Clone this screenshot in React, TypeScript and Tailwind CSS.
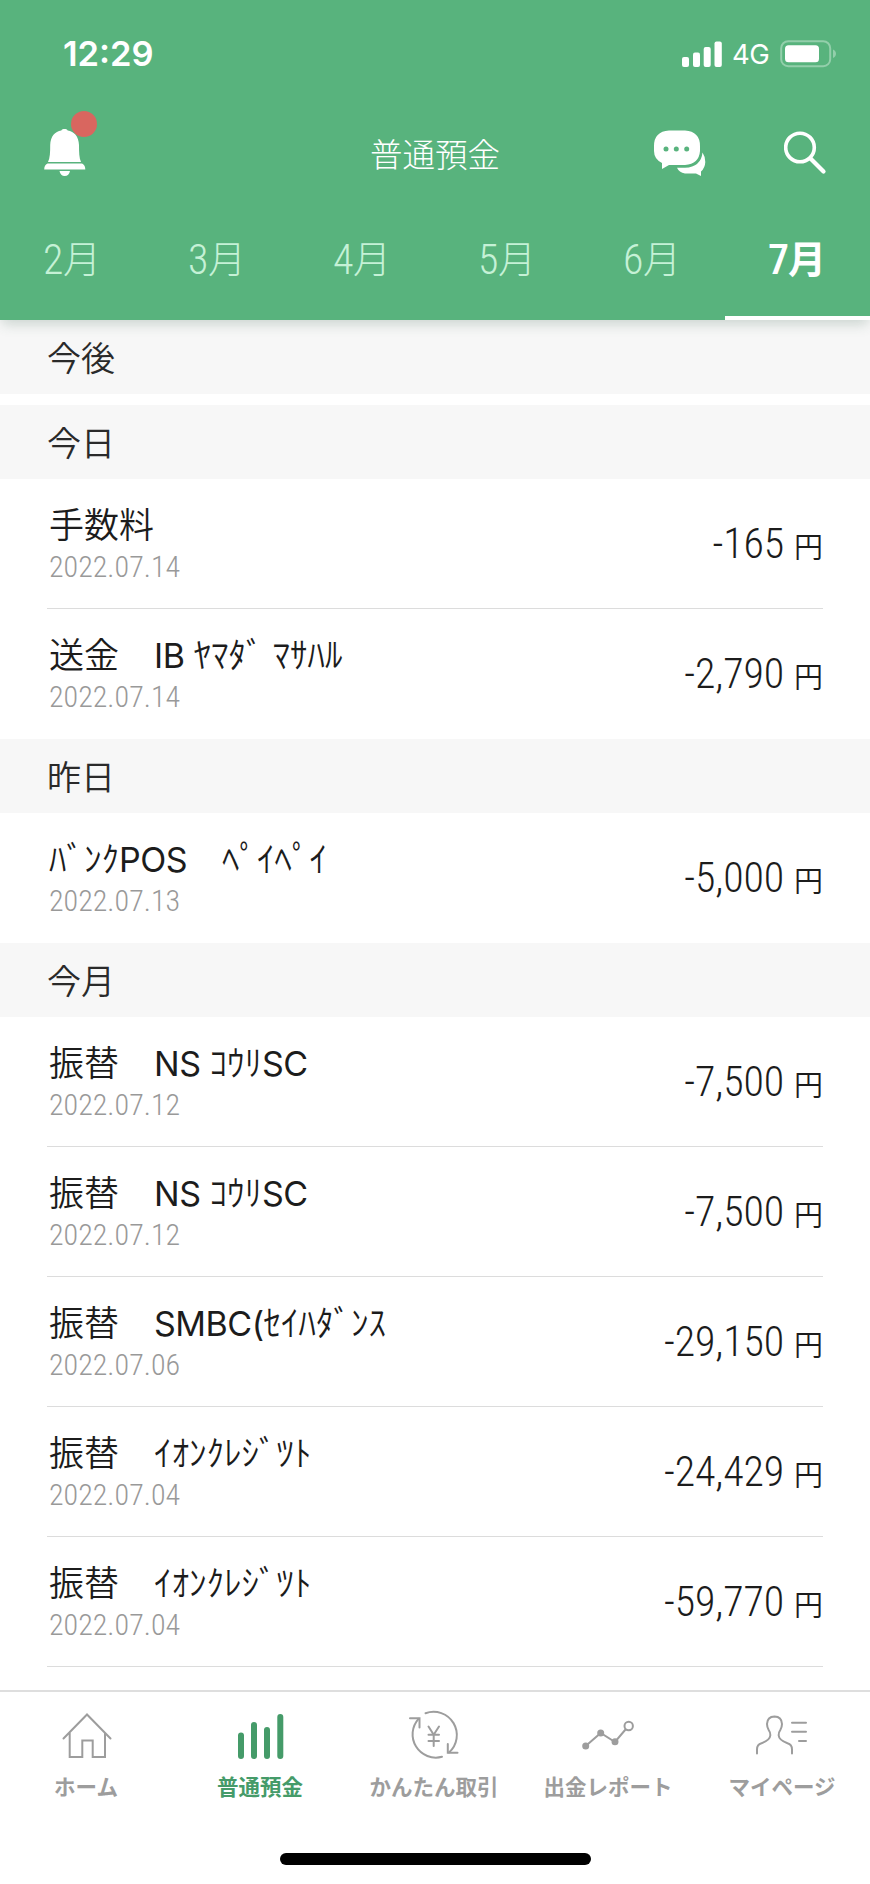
import React from 'react';

type Entry = { name: string; date: string; amount: string };
type Group = { label: string; entries: Entry[]; more?: boolean };

const months = ['2', '3', '4', '5', '6', '7'];

const groups: Group[] = [
  {
    label: '今日',
    entries: [
      { name: '手数料', date: '2022.07.14', amount: '-165' },
      { name: '送金　IB ﾔﾏﾀﾞ ﾏｻﾊﾙ', date: '2022.07.14', amount: '-2,790' },
    ],
  },
  {
    label: '昨日',
    entries: [{ name: 'ﾊﾞﾝｸPOS　ﾍﾟｲﾍﾟｲ', date: '2022.07.13', amount: '-5,000' }],
  },
  {
    label: '今月',
    more: true,
    entries: [
      { name: '振替　NS ｺｳﾘSC', date: '2022.07.12', amount: '-7,500' },
      { name: '振替　NS ｺｳﾘSC', date: '2022.07.12', amount: '-7,500' },
      { name: '振替　SMBC(ｾｲﾊﾀﾞﾝｽ', date: '2022.07.06', amount: '-29,150' },
      { name: '振替　ｲｵﾝｸﾚｼﾞﾂﾄ', date: '2022.07.04', amount: '-24,429' },
      { name: '振替　ｲｵﾝｸﾚｼﾞﾂﾄ', date: '2022.07.04', amount: '-59,770' },
    ],
  },
];

function StatusBar() {
  return (
    <div className="flex h-[104px] items-start justify-between pt-[33px] pr-[32px] pl-[63px]">
      <span className="font-['Inter',sans-serif] text-[34.5px] leading-[41px] font-semibold">12:29</span>
      <div className="flex items-center">
        <svg viewBox="0 0 40 26" className="h-[26px] w-[40px] fill-white">
          <rect x="0" y="16" width="7" height="10" rx="2" />
          <rect x="11" y="11.5" width="7" height="14.5" rx="2" />
          <rect x="21.7" y="6" width="7" height="20" rx="2" />
          <rect x="32.5" y="0.5" width="7.3" height="25.5" rx="2" />
        </svg>
        <span className="ml-[10px] h-[41px] w-[48px] pt-px font-['Inter',sans-serif] text-[27.5px] leading-[41px] font-normal tracking-[-0.5px]">4G</span>
        <svg viewBox="0 0 58 28" className="h-[28px] w-[58px]">
          <rect x="1.2" y="1.2" width="49" height="25" rx="7" fill="none" stroke="#93cfab" strokeWidth="2" />
          <rect x="5" y="5.2" width="34" height="17" rx="3.5" fill="white" />
          <path d="M53 9.500c4 1.500 4 7 0 8.500z" fill="#93cfab" />
        </svg>
      </div>
    </div>
  );
}

function TitleBar() {
  return (
    <div className="flex h-[104px] items-start pr-[43px] pl-[44px]">
      <div className="relative w-[296px] pt-[24px]">
        <svg viewBox="0 0 42 48" className="h-[48px] w-[42px] fill-white">
          <path d="M4 34C6 30 6.200 24 6.200 17C6.500 8 11 3.500 17.300 2.400C18.500 0.500 22.500 0.500 23.700 2.400C30 3.500 34.700 8 35 17C35 24 35.200 30 37 34z" />
          <path d="M3.500 35.500H38Q41.300 37 41.300 41.500H0.200Q0.200 37 3.500 35.500z" />
          <path d="M15.500 43H26Q25 48 20.700 48Q16.500 48 15.500 43z" />
        </svg>
        {/* unread badge */}
        <span className="absolute top-[6.5px] left-[26.5px] size-[26px] rounded-full bg-[#d9665f]" />
      </div>
      <h1 className="w-[190px] pt-[26px] text-center font-['Noto_Sans_CJK_JP',sans-serif] text-[32.5px] leading-[46px] font-light">普通預金</h1>
      <div className="ml-auto flex gap-[78px] pt-[26px]">
        <svg viewBox="0 0 52 46" className="h-[46px] w-[52px]">
          <path d="M15 0.500H31Q46 1.500 46 16V21Q45 34 31 35H15L8 39V33Q0 29 0 21V16Q0 1.500 15 0.500z" fill="white" />
          <circle cx="12" cy="19" r="2.500" fill="#58b37d" />
          <circle cx="22.300" cy="19" r="2.500" fill="#58b37d" />
          <circle cx="32.700" cy="19" r="2.500" fill="#58b37d" />
          <path d="M48.500 22.500Q51.500 27 51.300 32Q51 38 47 41.500V46L42 43.500H31Q25 42.500 23 37.800H31Q47 37 48.500 22.500z" fill="white" />
        </svg>
        <svg viewBox="0 0 43 45" className="h-[45px] w-[43px] fill-none stroke-white" strokeLinecap="round">
          <circle cx="16" cy="17.500" r="14.300" strokeWidth="3.600" />
          <path d="M26.500 28.500L39.500 41.500" strokeWidth="4.200" />
        </svg>
      </div>
    </div>
  );
}

function MonthTabs() {
  return (
    <div className="flex h-[112px]">
      {months.map((m) => {
        const active = m === '7';
        return (
          <div
            key={m}
            className={`flex w-[145px] items-start border-b-4 pt-[24px] pl-[43px] ${active ? 'border-white text-white' : 'border-transparent text-[#c5f1d6]'}`}
          >
            <span className={`mt-[3px] w-[20px] font-['Roboto_Condensed','Roboto',sans-serif] text-[42px] leading-[50px] [font-stretch:75%] ${active ? 'font-medium' : 'font-light'}`}>{m}</span>
            <span className={`font-['Noto_Sans_CJK_JP',sans-serif] text-[38px] leading-[50px] ${active ? 'font-bold' : 'font-light'}`}>月</span>
          </div>
        );
      })}
    </div>
  );
}

function SectionLabel({ children }: { children: React.ReactNode }) {
  return (
    <h2 className="flex h-[74px] items-center bg-[#f7f7f7] pl-[47px] font-['Noto_Sans_CJK_JP',sans-serif] text-[34px] leading-[50px] font-[350] text-[#2a2a2a]">
      {children}
    </h2>
  );
}

// Latin runs are set a little heavier and tighter than the kana around them
function EntryName({ name }: { name: string }) {
  return (
    <p className="font-['Noto_Sans_CJK_JP',sans-serif] text-[35px] leading-[48px] font-[350] whitespace-pre text-[#1c1c1c]">
      {name.split(/([A-Z( ]+)/).map((part, i) =>
        i % 2 ? (
          <span key={i} className="font-['Inter',sans-serif] text-[34px] font-normal tracking-[-0.5px]">{part}</span>
        ) : (
          part
        )
      )}
    </p>
  );
}

function EntryRow({ entry, divider }: { entry: Entry; divider: boolean }) {
  return (
    <li className={`mx-[47px] flex h-[130px] justify-between border-b ${divider ? 'border-[#dcdcdc]' : 'border-transparent'}`}>
      <div className="flex flex-col pt-[20px] pl-[2px]">
        <div className="h-[50px]">
          <EntryName name={entry.name} />
        </div>
        <p className="font-['Roboto_Condensed','Roboto',sans-serif] text-[30px] leading-[36px] font-light text-[#999] [font-stretch:75%]">{entry.date}</p>
      </div>
      <div className="flex items-baseline pt-[38px] text-[#1c1c1c]">
        <span className="font-['Roboto_Condensed','Roboto',sans-serif] text-[42px] leading-[54px] font-light tracking-[-0.15px] [font-stretch:75%]">{entry.amount}</span>
        <span className="ml-[10px] font-['Noto_Sans_CJK_JP',sans-serif] text-[29px] leading-[54px] font-[350]">円</span>
      </div>
    </li>
  );
}

const navItems = [
  {
    label: 'ホーム',
    icon: <path d="M6.500 33.500L30 9.500L53.500 33.500M12.700 28V52H25.300V35.500H35.700V52H48V28" strokeWidth="2" />,
  },
  {
    label: '普通預金',
    icon: <path d="M10 30.500V51M23 20V51M36 25V51M49.300 12V51" strokeWidth="6" />,
    active: true,
  },
  {
    label: 'かんたん取引',
    icon: (
      <g strokeWidth="2">
        <path d="M20.500 8.200A23.300 23.300 0 0 1 44 47.500M37 51.800A23.300 23.300 0 0 1 13.500 13.800" />
        <path d="M5 13.300H14.500V22.500M42.800 39V47.700H52.500" />
        <path d="M23.500 21.500L28.700 29.700L34 21.500M28.700 29.700V41M23.500 29.700H34M23.500 36H34" />
      </g>
    ),
  },
  {
    label: '出金レポート',
    icon: (
      <g strokeWidth="2">
        <path d="M6.700 41L21.700 28L36 37L46.500 24.500" />
        <circle cx="6.700" cy="41" r="2.500" fill="currentColor" />
        <circle cx="21.700" cy="28" r="2.500" fill="currentColor" />
        <circle cx="36" cy="36.700" r="2.500" fill="currentColor" />
        <circle cx="49.700" cy="21" r="4.200" />
      </g>
    ),
  },
  {
    label: 'マイページ',
    icon: (
      <g strokeWidth="2">
        <path d="M4 48.500V44.500Q4 39.500 8.500 38.300Q17 35 17.300 30.500Q17.500 27.500 15.700 25Q14 22 14 19Q14.300 11.700 21.500 11.500Q28.700 11.700 29 19Q29 22 27.300 25Q25.500 27.500 25.700 30.500Q26 35 34.500 38.300Q39 39.500 39 44.500V48.500" />
        <path d="M39 17.700H53M39 26.700H53M46 36H53" />
      </g>
    ),
  },
];

function BottomNav() {
  return (
    <nav className="flex flex-1 flex-col items-center border-t-2 border-[#dedede] bg-white">
      <ul className="flex h-[161px] w-full">
        {navItems.map((item) => (
          <li key={item.label} className={`flex flex-1 flex-col items-center pt-[13px] ${item.active ? 'text-[#459b69]' : 'text-[#9d9d9d]'}`}>
            <svg viewBox="0 0 60 60" className="size-[60px] fill-none stroke-current" strokeLinecap="round">
              {item.icon}
            </svg>
            <span className="mt-[5px] -ml-[2px] font-['Noto_Sans_CJK_JP',sans-serif] text-[21.5px] leading-[32px] font-bold">{item.label}</span>
          </li>
        ))}
      </ul>
      <div className="h-[12px] w-[311px] rounded-full bg-black" />
    </nav>
  );
}

export default function App() {
  return (
    <div lang="ja" className="flex h-[1884px] w-[870px] flex-col overflow-hidden bg-white">
      <header className="relative z-10 bg-[#58b37d] text-white shadow-[0_6px_12px_-2px_rgba(60,100,80,0.24)]">
        <StatusBar />
        <TitleBar />
        <MonthTabs />
      </header>
      <main className="h-[1370px] overflow-hidden">
        <SectionLabel>今後</SectionLabel>
        <div className="h-[11px]" />
        {groups.map((group) => (
          <section key={group.label}>
            <SectionLabel>{group.label}</SectionLabel>
            <ul>
              {group.entries.map((entry, i) => (
                <EntryRow key={i} entry={entry} divider={!!group.more || i < group.entries.length - 1} />
              ))}
            </ul>
          </section>
        ))}
      </main>
      <BottomNav />
    </div>
  );
}
